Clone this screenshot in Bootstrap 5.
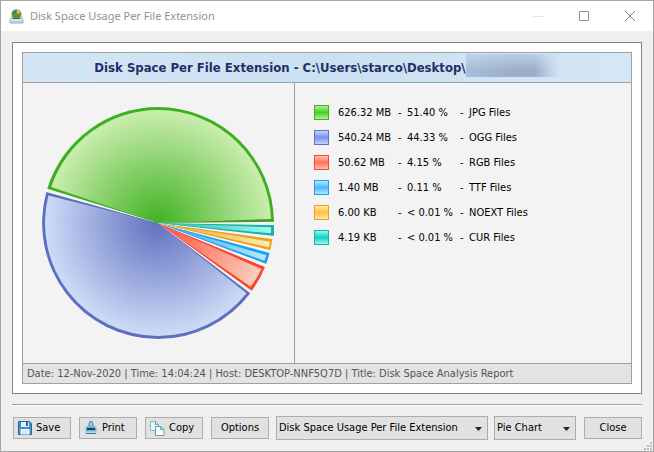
<!DOCTYPE html>
<html lang="en">
<head>
<meta charset="utf-8">
<meta name="viewport" content="width=device-width, initial-scale=1">
<title>Disk Space Usage Per File Extension</title>
<link rel="stylesheet" href="https://cdn.jsdelivr.net/npm/bootstrap@5.3.0/dist/css/bootstrap.min.css">
<style>
body { font-family: "DejaVu Sans Condensed", "Noto Sans", sans-serif; font-size: 11px; line-height: 16px; color: #000; background: #efefef; }
.window { min-height: 100vh; border: 1px solid #a5a5a5; background: #efefef; }
.titlebar { height: 30px; background: #fff; color: #929292; padding-left: 8px; }
.titlebar h1 { font-family: "Noto Sans", "Open Sans", sans-serif; font-size: 11px; line-height: 16px; font-weight: 400; margin: 0 0 0 6px; }
.win-btn { width: 46px; height: 30px; border: 0; background: none; padding: 0; display: flex; align-items: center; justify-content: center; }
.content-area { padding: 11px 11px 10px; }
.frame { border: 1px solid #83838f; background: #fff; padding: 9px; }
.report { border: 1px solid #a0a0a0; background: #f3f3f3; }
.report-head { height: 30px; border-bottom: 1px solid #a0a0a0; background: linear-gradient(90deg, #d4e6f5, #cbe0f0 50%, #d4e7f6); padding-left: 6px; }
.report-head h2 { font-size: 13px; line-height: 20px; font-weight: 700; color: #1f3069; margin: 0; white-space: nowrap; }
.redacted { width: 100px; height: 23px; margin-top: 1px; background: linear-gradient(90deg, #a9bed8, #9badca 45%, #9badca 68%, #cfe2f2 92%, transparent); -webkit-mask-image: linear-gradient(#0006, #000 70%); mask-image: linear-gradient(#0006, #000 70%); }
.chart-pane { flex: 0 0 272px; border-right: 1px solid #a0a0a0; padding: 24px 19px; }
.chart-pane svg { display: block; width: 232px; height: 232px; }
.legend-pane { padding: 17px 19px; }
.legend-pane td { height: 25px; padding: 0; white-space: nowrap; }
.swatch { display: block; width: 15px; height: 15px; border: 1px solid var(--edge); background: linear-gradient(var(--pale), var(--deep) 50%, var(--pale)); }
.sw-jpg { --edge: #43b11f; --deep: #43d31b; --pale: #b5eb9c; }
.sw-ogg { --edge: #6170c0; --deep: #7c8ff5; --pale: #c4d2fb; }
.sw-rgb { --edge: #fa4a32; --deep: #ff745f; --pale: #ffc1b1; }
.sw-ttf { --edge: #249bed; --deep: #52b7fa; --pale: #a9eaff; }
.sw-none { --edge: #eda01f; --deep: #ffbd50; --pale: #ffec9f; }
.sw-cur { --edge: #19b3aa; --deep: #13d1c6; --pale: #8ffbf1; }
.report-foot { height: 20px; line-height: 19px; border-top: 1px solid #a0a0a0; background: #e3e3e3; color: #555; padding-left: 4px; white-space: nowrap; }
.toolbar { border-top: 1px solid #a0a0a0; box-shadow: inset 0 1px #fff; margin: 0 11px; padding: 11px 0 0 1px; }
.tool-btn { flex: 0 0 58px; height: 22px; border: 1px solid #adadad; background: #e1e1e1; padding: 0; font-size: 11px; line-height: 16px; color: #000; }
.tool-sel { height: 24px; border: 1px solid #adadad; border-radius: 0; padding: 0 20px 0 2px; font-size: 11px; line-height: 16px; color: #000; appearance: none; background: #e1e1e1; width: 100%; }
.sel-box { position: relative; }
.sel-box svg { position: absolute; right: 6px; top: 11px; pointer-events: none; }
.sel-report { flex: 0 0 212px; margin-left: -1px; }
.sel-type { flex: 0 0 82px; margin-left: -2px; }
.grip { line-height: 0; padding: 0 1px 1px 0; }
</style>
<script src="https://cdn.jsdelivr.net/npm/bootstrap@5.3.0/dist/js/bootstrap.bundle.min.js"></script>
</head>
<body>
<div class="window d-flex flex-column">
  <header class="titlebar d-flex align-items-center">
    <svg width="15" height="15" viewBox="0 0 15 15" aria-hidden="true">
      <path d="M3 7h9l2 4v3H1v-3z" fill="#d5e3ea" stroke="#9eb0bb"/>
      <path d="M2 13h11" stroke="#72c9ea"/>
      <ellipse cx="7.500" cy="5" rx="5" ry="4.500" fill="#559a2b"/>
      <path d="M7.500 4.500V.5a4.500 4.500 0 0 1 4 4z" fill="#efb93a"/>
      <path d="M7.500 4.500H3.500a4.500 4.500 0 0 1 4-4z" fill="#397e98"/>
      <path d="M3.500 9.500h8" stroke="#3d6c34"/>
    </svg>
    <h1>Disk Space Usage Per File Extension</h1>
    <div class="d-flex ms-auto">
      <button class="win-btn" aria-label="Minimize"><svg width="10" height="10"><path d="M0 5.500h10" stroke="#e4e4e4"/></svg></button>
      <button class="win-btn" aria-label="Maximize"><svg width="10" height="10"><path d="M.5.5h9v9h-9z" fill="none" stroke="#929292"/></svg></button>
      <button class="win-btn" aria-label="Close window"><svg width="10" height="10"><path d="M0 0l10 10M10 0L0 10" stroke="#888"/></svg></button>
    </div>
  </header>

  <main class="content-area">
    <div class="frame">
      <section class="report">
        <div class="report-head d-flex align-items-center justify-content-center">
          <h2>Disk Space Per File Extension - C:\Users\starco\Desktop\</h2>
          <span class="redacted align-self-start"></span>
        </div>
        <div class="d-flex">
          <div class="chart-pane">
            <svg viewBox="42 107 232 232" role="img" aria-label="Pie chart of disk space per file extension">
              <defs>
                <radialGradient id="gJpg" gradientUnits="userSpaceOnUse" cx="158" cy="223" r="116"><stop offset="0" stop-color="#40b123"/><stop offset="1" stop-color="#ceefb2"/></radialGradient>
                <radialGradient id="gOgg" gradientUnits="userSpaceOnUse" cx="158" cy="223" r="116"><stop offset="0" stop-color="#6270c1"/><stop offset="1" stop-color="#cfdff8"/></radialGradient>
                <radialGradient id="gRgb" gradientUnits="userSpaceOnUse" cx="158" cy="223" r="116"><stop offset="0" stop-color="#ff4c34"/><stop offset="1" stop-color="#f8d2c2"/></radialGradient>
                <radialGradient id="gTtf" gradientUnits="userSpaceOnUse" cx="158" cy="223" r="116"><stop offset="0" stop-color="#249dee"/><stop offset="1" stop-color="#b2f2fa"/></radialGradient>
                <radialGradient id="gNone" gradientUnits="userSpaceOnUse" cx="158" cy="223" r="116"><stop offset="0" stop-color="#eda024"/><stop offset="1" stop-color="#f6f0b0"/></radialGradient>
                <radialGradient id="gCur" gradientUnits="userSpaceOnUse" cx="158" cy="223" r="116"><stop offset="0" stop-color="#1cb4ac"/><stop offset="1" stop-color="#a4f9ef"/></radialGradient>
                <linearGradient id="eJpg" x1="0" x2="0" y1="0" y2="1"><stop offset=".94" stop-color="#40b023"/><stop offset="1" stop-color="#359918"/></linearGradient>
              </defs>
              <g stroke="#fff" stroke-width="1" stroke-linejoin="round" paint-order="stroke">
                <path fill="#5e6fc0" d="M158 223L46.300 192A116 116 0 0 0 158 339A116 116 0 0 0 250.300 293.200z"/>
                <path fill="url(#eJpg)" d="M158 223L47.200 188.700A116 116 0 0 1 158 107A116 116 0 0 1 274 221.800z"/>
                <path fill="#fa452f" d="M158 223L265 267Q260 280 251.700 290.700z"/>
                <path fill="#209fef" d="M158 223L269.700 253L266.300 264z"/>
                <path fill="#eea021" d="M158 223L272.700 239L270.300 250.300z"/>
                <path fill="#1bb2ab" d="M158 223L274 225V236z"/>
              </g>
              <path fill="url(#gOgg)" d="M158 223L48.400 195.500A113 113 0 0 0 158 336A113 113 0 0 0 246.500 293.300z"/>
              <path fill="url(#gJpg)" d="M158 223L51.200 187A113 113 0 0 1 158 110A113 113 0 0 1 271 219z"/>
              <path fill="url(#gRgb)" d="M158 223L261.300 269Q257 279 250.500 286.500z"/>
              <path fill="url(#gTtf)" d="M158 223L266.300 255.200L264.300 260.700z"/>
              <path fill="url(#gNone)" d="M158 223L270 241.700L268.700 247.200z"/>
              <path fill="url(#gCur)" d="M158 223L271 227.300V233.300z"/>
            </svg>
          </div>
          <div class="legend-pane">
            <table>
              <colgroup><col width="24"><col width="60"><col width="9"><col width="53"><col width="9"><col></colgroup>
              <tbody>
              <tr><td><span class="swatch sw-jpg"></span></td><td>626.32 MB</td><td>-</td><td>51.40 %</td><td>-</td><td>JPG Files</td></tr>
              <tr><td><span class="swatch sw-ogg"></span></td><td>540.24 MB</td><td>-</td><td>44.33 %</td><td>-</td><td>OGG Files</td></tr>
              <tr><td><span class="swatch sw-rgb"></span></td><td>50.62 MB</td><td>-</td><td>4.15 %</td><td>-</td><td>RGB Files</td></tr>
              <tr><td><span class="swatch sw-ttf"></span></td><td>1.40 MB</td><td>-</td><td>0.11 %</td><td>-</td><td>TTF Files</td></tr>
              <tr><td><span class="swatch sw-none"></span></td><td>6.00 KB</td><td>-</td><td>&lt; 0.01 %</td><td>-</td><td>NOEXT Files</td></tr>
              <tr><td><span class="swatch sw-cur"></span></td><td>4.19 KB</td><td>-</td><td>&lt; 0.01 %</td><td>-</td><td>CUR Files</td></tr>
              </tbody>
            </table>
          </div>
        </div>
        <div class="report-foot">Date: 12-Nov-2020 | Time: 14:04:24 | Host: DESKTOP-NNF5Q7D | Title: Disk Space Analysis Report</div>
      </section>
    </div>
  </main>

  <footer class="toolbar d-flex align-items-center gap-2">
    <button class="tool-btn d-flex align-items-center px-1 gap-1"><svg width="14" height="14" viewBox="0 0 14 14" aria-hidden="true"><path d="M.5.5h11l2 2v11H.5z" fill="#3d8fc6" stroke="#28699d"/><path d="M3 1h8v5H3z" fill="#e3f3fc"/><path d="M8 1h2v4H8z" fill="#28699d"/><path d="M2.500 8h9v5.500h-9z" fill="#f6fbff"/><path d="M4 10h6M4 12h6" stroke="#bcd5e5"/></svg>Save</button>
    <button class="tool-btn d-flex align-items-center px-1 gap-1"><svg width="14" height="14" viewBox="0 0 14 14" aria-hidden="true"><path d="M5 6V2.500L6 .5h2L9 2.500V6z" fill="#8ecae0" stroke="#438daf"/><path d="M3 5h8l1.500 2v4h-11V7z" fill="#71b7d2"/><path d="M3 8h8" stroke="#233e50" stroke-width="2"/><path d="M1 10.500h12V13H1z" fill="#b4d9e9"/><path d="M2 12.500h10" stroke="#397b9b"/></svg>Print</button>
    <button class="tool-btn d-flex align-items-center px-1 gap-1"><svg width="15" height="15" viewBox="0 0 15 15" aria-hidden="true"><path d="M.5.5h5l3 3v6h-8z" fill="#edf7fb" stroke="#83b5ca"/><path d="M5.500 5.500h5l3.500 3v6H5.500z" fill="#f6fbfd" stroke="#62a0b9"/><path d="M10.500 5.500v3H14M5.500.5v3h3" fill="none" stroke="#62a0b9"/></svg>Copy</button>
    <button class="tool-btn">Options</button>
    <div class="sel-box sel-report"><select class="tool-sel" aria-label="Report"><option>Disk Space Usage Per File Extension</option></select><svg width="7" height="4" aria-hidden="true"><path d="M0 0h7L3.500 4z" fill="#222"/></svg></div>
    <div class="sel-box sel-type"><select class="tool-sel" aria-label="Chart type"><option>Pie Chart</option></select><svg width="7" height="4" aria-hidden="true"><path d="M0 0h7L3.500 4z" fill="#222"/></svg></div>
    <button class="tool-btn">Close</button>
  </footer>
  <div class="grip mt-auto text-end"><svg width="8" height="8" aria-hidden="true"><path d="M6 0h2v2H6zM3 3h2v2H3zM6 3h2v2H6zM0 6h2v2H0zM3 6h2v2H3zM6 6h2v2H6z" fill="#bdbdbd"/></svg></div>
</div>
</body>
</html>
